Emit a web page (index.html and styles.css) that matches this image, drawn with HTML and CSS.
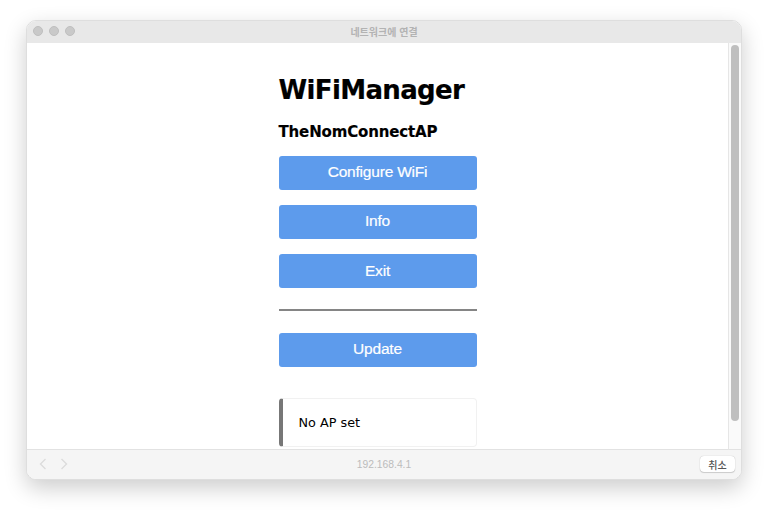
FILE: index.html
```html
<!DOCTYPE html>
<html lang="ko">
<head>
    <meta charset="UTF-8">
    <meta name="viewport" content="width=device-width, initial-scale=1.0">
    <title>네트워크에 연결</title>
    <link rel="stylesheet" href="styles.css">
</head>
<body>
    <div class="window">
        <div class="titlebar">
            <div class="lights">
                <span class="light"></span>
                <span class="light"></span>
                <span class="light"></span>
            </div>
            <div class="title">네트워크에 연결</div>
        </div>
        <div class="viewport">
            <div class="content">
                <div class="wrap">
                    <h1>WiFiManager</h1>
                    <h3>TheNomConnectAP</h3>
                    <button type="button" class="btn">Configure WiFi</button>
                    <button type="button" class="btn">Info</button>
                    <button type="button" class="btn">Exit</button>
                    <hr>
                    <button type="button" class="btn">Update</button>
                    <div class="msg">No AP set</div>
                </div>
            </div>
            <div class="scrollbar"><div class="thumb"></div></div>
        </div>
        <div class="footer">
            <div class="nav">
                <svg width="8" height="12" viewBox="0 0 8 12"><path d="M6.5 1 L1.5 6 L6.5 11" fill="none" stroke="#dcdcdc" stroke-width="1.4"/></svg>
                <svg width="8" height="12" viewBox="0 0 8 12"><path d="M1.5 1 L6.5 6 L1.5 11" fill="none" stroke="#dcdcdc" stroke-width="1.4"/></svg>
            </div>
            <div class="address">192.168.4.1</div>
            <button type="button" class="cancel">취소</button>
        </div>
    </div>
</body>
</html>
```

FILE: styles.css
```css
* {
    box-sizing: border-box;
}
html, body {
    height: 100%;
}
body {
    margin: 0;
    padding: 20px 26px 33px 26px;
    background-color: #fff;
    overflow: hidden;
    font-family: 'DejaVu Sans', Verdana, sans-serif;
}
.window {
    display: flex;
    flex-direction: column;
    width: 716px;
    height: 460px;
    border: 1px solid #dedede;
    border-radius: 10px;
    overflow: hidden;
    background-color: #fff;
    box-shadow: 0 8px 22px rgba(0, 0, 0, 0.2);
}
.titlebar {
    position: relative;
    display: flex;
    align-items: center;
    justify-content: center;
    flex: 0 0 22px;
    padding-bottom: 2px;
    background-color: #e8e8e8;
}
.lights {
    position: absolute;
    left: 6px;
    top: 5px;
    display: flex;
    gap: 6px;
}
.light {
    width: 10px;
    height: 10px;
    border-radius: 50%;
    background-color: #c9c9c9;
    border: 1px solid #bebebe;
}
.title {
    font-family: 'Noto Sans CJK KR', sans-serif;
    font-size: 10px;
    font-weight: 700;
    color: #b3b3b3;
}
.viewport {
    display: flex;
    flex: 1;
    min-height: 0;
}
.content {
    flex: 1;
    overflow: hidden;
    border-bottom: 1px solid #e2e2e2;
}
.wrap {
    width: 198px;
    margin: 0 auto;
    padding-top: 32px;
}
h1 {
    margin: 0;
    font-size: 26px;
    line-height: 31px;
    letter-spacing: -0.65px;
    font-weight: 700;
    color: #000;
    -webkit-text-stroke: 0.2px #000;
}
h3 {
    margin: 17px 0 13.5px;
    font-size: 15px;
    line-height: 19px;
    letter-spacing: -0.15px;
    font-weight: 700;
    color: #000;
    -webkit-text-stroke: 0.15px #000;
}
.btn {
    display: block;
    width: 100%;
    height: 34px;
    margin-bottom: 15.25px;
    padding: 0 0 1px;
    border: 0;
    border-radius: 3px;
    background-color: #5d9bec;
    color: #fff;
    font-family: 'Liberation Sans', Arial, sans-serif;
    font-size: 15.5px;
    letter-spacing: -0.2px;
    -webkit-text-stroke: 0.2px #fff;
}
hr {
    height: 1.5px;
    margin: 21px 0 22px;
    border: 0;
    background-color: #858585;
}
.msg {
    height: 49px;
    margin-top: 31px;
    padding: 16px 16px;
    border: 1px solid #f1f1f1;
    border-left: 4px solid #777;
    border-radius: 4px;
    font-size: 12.8px;
    line-height: 16px;
    color: #000;
}
.scrollbar {
    flex: 0 0 12px;
    padding: 2px;
    background-color: #fafafa;
    border-left: 1px solid #e6e6e6;
    border-bottom: 1px solid #e2e2e2;
}
.thumb {
    width: 8px;
    height: 376px;
    border-radius: 4px;
    background-color: #bfbfbf;
}
.footer {
    position: relative;
    display: flex;
    align-items: center;
    justify-content: center;
    flex: 0 0 29px;
    padding-bottom: 1px;
    background-color: #f5f5f5;
}
.nav {
    position: absolute;
    left: 12px;
    top: 8px;
    display: flex;
    gap: 13px;
}
.address {
    font-family: 'Liberation Sans', Arial, sans-serif;
    font-size: 10.3px;
    color: #bcbcbc;
}
.cancel {
    position: absolute;
    right: 6px;
    top: 6px;
    width: 35px;
    height: 16px;
    padding: 0;
    border: 0;
    border-radius: 4px;
    background-color: #fff;
    box-shadow: 0 0 1px rgba(0, 0, 0, 0.3), 0 1px 1px rgba(0, 0, 0, 0.15);
    font-family: 'Noto Sans CJK KR', sans-serif;
    font-size: 10px;
    font-weight: 500;
    color: #555;
}
```
